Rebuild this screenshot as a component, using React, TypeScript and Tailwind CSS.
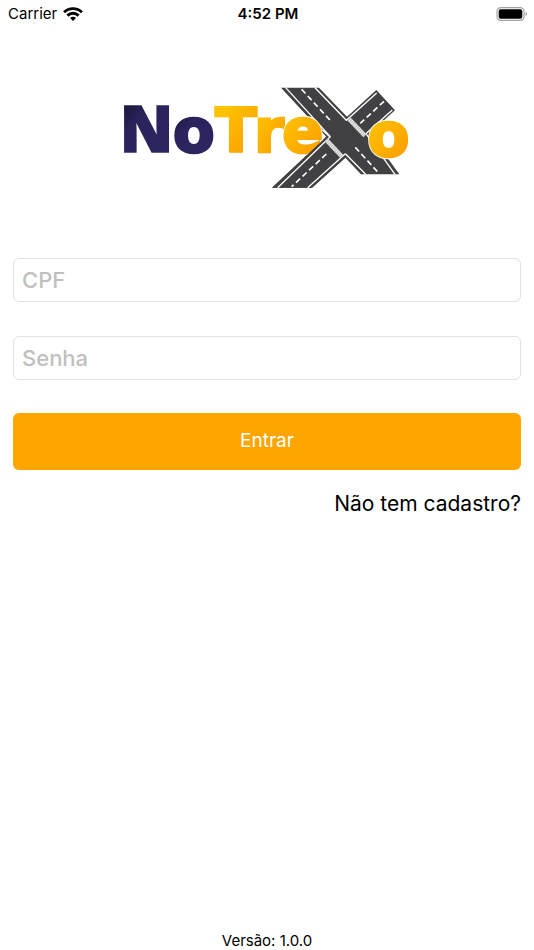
import { useState } from "react"

function WifiIcon() {
    return (
        <svg width="20" height="14" viewBox="0 0 20 14" fill="none" stroke="black" strokeWidth="2.9" aria-hidden="true">
            <path d="M1.1 5.2a12.8 12.8 0 0 1 17.8 0" />
            <path d="M4.4 8.6a8 8 0 0 1 11.2 0" />
            <path d="M10 14l-3-3a4.2 4.2 0 0 1 6 0z" fill="black" stroke="none" />
        </svg>
    )
}

function BatteryIcon() {
    return (
        <svg width="32" height="14" viewBox="0 0 32 14" aria-hidden="true">
            <rect x="1" y="0.6" width="27" height="12.8" rx="4" fill="none" stroke="#a3a3a3" strokeWidth="1.2" />
            <rect x="2.7" y="2.3" width="23.6" height="9.4" rx="2" fill="black" />
            <path d="M29.5 5v4q1.7-.6 1.7-2t-1.7-2z" fill="#a3a3a3" />
        </svg>
    )
}

function Logo() {
    return (
        <svg
            className="overflow-visible"
            width="292"
            height="104"
            viewBox="-420 18 876 312"
            role="img"
            aria-label="NoTrexo"
        >
            <defs>
                <linearGradient id="navy" x1="0" y1="0" x2="0.6" y2="1">
                    <stop offset="0.15" stopColor="#14122f" />
                    <stop offset="0.45" stopColor="#2a235c" />
                    <stop offset="1" stopColor="#2c2560" />
                </linearGradient>
                <linearGradient id="amber" x1="0" y1="0" x2="0.7" y2="1">
                    <stop offset="0.2" stopColor="#ffc400" />
                    <stop offset="1" stopColor="#fb9d00" />
                </linearGradient>
                <text id="letter-e" x="64" y="215">e</text>
                <text id="letter-o" x="320" y="227">o</text>
            </defs>
            <g fontFamily="'DejaVu Sans', sans-serif" fontWeight="700" fontSize="182" strokeWidth="8">
                <text
                    x="-423"
                    y="217"
                    fontFamily="'Open Sans', sans-serif"
                    fontWeight="800"
                    fontSize="191"
                    fill="url(#navy)"
                    stroke="url(#navy)"
                    strokeWidth="5"
                >
                    N
                </text>
                <text x="-264" y="216" fill="url(#navy)" stroke="url(#navy)">o</text>
                <text x="-137" y="216" fill="url(#amber)" stroke="url(#amber)">T</text>
                <text x="-21" y="216" fill="url(#amber)" stroke="url(#amber)">r</text>
            </g>

            {/* crossing roads */}
            <path
                d="M60 23H174L258 110L346 30L402 91L326 160L415 283H300L253 233L153 323H33L196 170Z"
                fill="#414042"
            />
            <g fill="none" stroke="white" strokeWidth="4">
                <path d="M74 23L208 170" />
                <path d="M162 23L256 121L347 39" />
                <path d="M394 90L315 161L402 283" />
                <path d="M314 283L253 221" />
            </g>
            <g stroke="white" strokeWidth="5" strokeDasharray="17 10">
                <path d="M122 28L213 127" />
                <path d="M369 64L298 130" />
                <path d="M283 202L352 278" />
            </g>

            <g fontFamily="'DejaVu Sans', sans-serif" fontWeight="700" fontSize="182" fill="url(#amber)">
                <use href="#letter-e" stroke="white" strokeWidth="13" />
                <use href="#letter-e" stroke="url(#amber)" strokeWidth="8" />
            </g>

            {/* lower left arm runs over the e */}
            <path d="M196 168L253 233L153 323H33L190 176Z" fill="#414042" />
            <g fill="none" stroke="white" strokeWidth="4">
                <path d="M184 149L207 171L50 323" />
                <path d="M253 221L140 323" />
                <path d="M196 222L92 320" strokeWidth="5" strokeDasharray="17 10" />
            </g>
            <g stroke="#ececec" strokeWidth="13">
                <path d="M264 117L312 167" />
                <path d="M196 180L242 229" />
            </g>
            <g stroke="#a8a8a8" strokeWidth="13" strokeDasharray="2 4">
                <path d="M264 117L312 167" />
                <path d="M196 180L242 229" />
            </g>

            <g fontFamily="'DejaVu Sans', sans-serif" fontWeight="700" fontSize="182" fill="url(#amber)">
                <use href="#letter-o" stroke="white" strokeWidth="13" />
                <use href="#letter-o" stroke="url(#amber)" strokeWidth="8" />
            </g>
        </svg>
    )
}

const inputClass =
    "h-11 w-full rounded-md border border-[#e2e2e2] bg-white px-2 text-[22px] font-medium text-black outline-none placeholder:text-[#c0c0c0]"

export default function App() {
    const [cpf, setCpf] = useState("")
    const [senha, setSenha] = useState("")

    return (
        <div className="flex min-h-screen flex-col bg-white font-['Inter',sans-serif] text-black">
            <header className="grid h-7 grid-cols-3 items-center pr-1.5 pl-2 text-[15px]">
                <div className="flex items-center gap-1.5">
                    <span>Carrier</span>
                    <WifiIcon />
                </div>
                <span className="text-center font-semibold">4:52 PM</span>
                <div className="flex justify-end">
                    <BatteryIcon />
                </div>
            </header>

            <main className="flex flex-1 flex-col px-[13px] pt-[58px]">
                <div className="flex justify-center">
                    <Logo />
                </div>
                <form className="mt-[68px] flex flex-col" onSubmit={(e) => e.preventDefault()}>
                    <input
                        className={inputClass}
                        aria-label="CPF"
                        placeholder="CPF"
                        value={cpf}
                        onChange={(e) => setCpf(e.target.value)}
                    />
                    <input
                        className={`${inputClass} mt-[34px]`}
                        type="password"
                        aria-label="Senha"
                        placeholder="Senha"
                        value={senha}
                        onChange={(e) => setSenha(e.target.value)}
                    />
                    <button type="submit" className="mt-[33px] h-[57px] rounded-md bg-[#ffa500] text-[19px] text-white">
                        Entrar
                    </button>
                </form>
                <a href="#cadastro" className="mt-[18px] self-end text-[21px] leading-8">
                    Não tem cadastro?
                </a>
            </main>

            <footer className="text-center text-[15px] leading-[18px]">Versão: 1.0.0</footer>
        </div>
    )
}
